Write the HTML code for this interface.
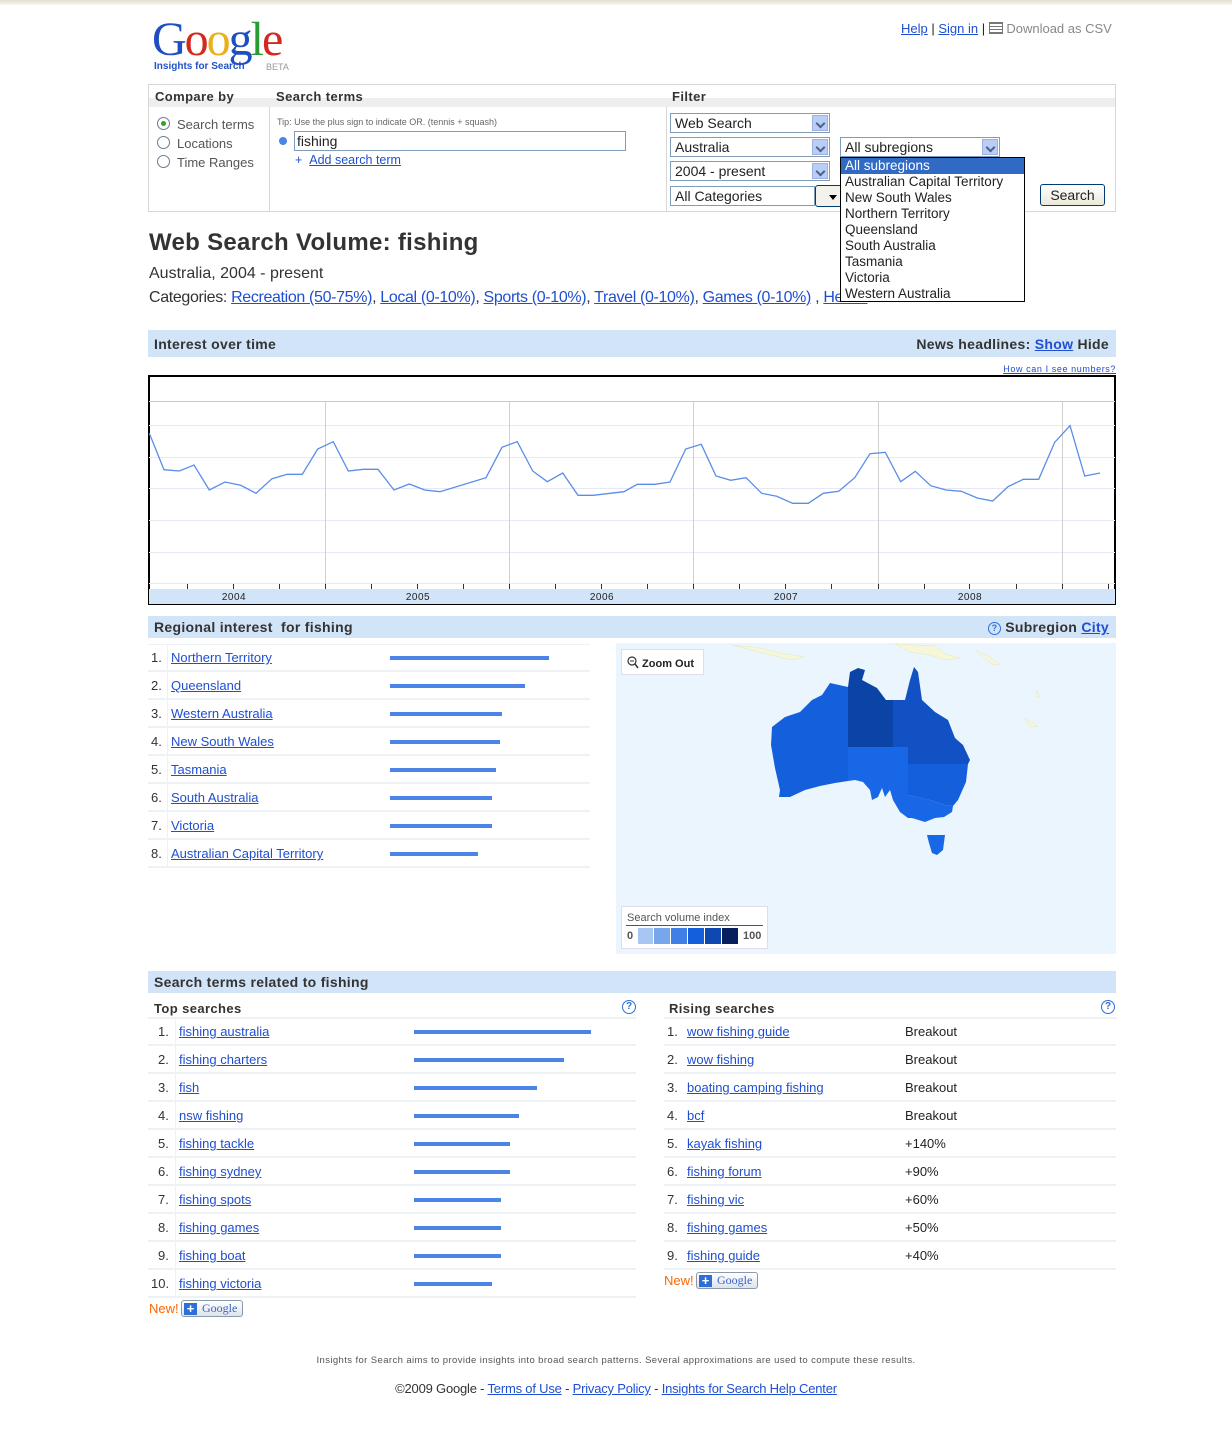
<!DOCTYPE html>
<html><head><meta charset="utf-8"><style>
*{margin:0;padding:0;box-sizing:border-box}
body{width:1232px;height:1440px;position:relative;background:#fff;font-family:"Liberation Sans",Arial,sans-serif;font-size:13px;color:#222;overflow:hidden}
.a{position:absolute;white-space:nowrap}
a,.l{color:#1f4fd1;text-decoration:underline}
.hd{position:absolute;left:148px;width:968px;height:25px;background:#d2e4f8;font-weight:bold;font-size:14px;color:#333;padding:5px 6px;letter-spacing:.3px}
.sel{position:absolute;height:20px;border:1px solid #7f9db9;background:#fff;font-size:14px;padding:1px 4px}
.sel i{position:absolute;right:1px;top:1px;width:16px;height:16px;background:#b9cdf6;border:1px solid #9db1e0}
.sel i:after{content:"";position:absolute;left:4px;top:4px;width:5px;height:5px;border-right:2px solid #4d6185;border-bottom:2px solid #4d6185;transform:rotate(45deg)}
.row{position:absolute;height:28px;border-bottom:2px solid #eef2f7;font-size:13px}
.row .n{position:absolute;top:6px;color:#333}
.row .t{position:absolute;top:6px}
.bar{position:absolute;height:4px;background:#4a84e6}
.radio{position:absolute;width:13px;height:13px;border:1px solid #6a7c90;border-radius:50%;background:#fff}
</style></head><body>
<div class="a" style="left:0;top:0;width:1232px;height:5px;background:linear-gradient(#e4dfd0,#f7f5ee)"></div>

<div class="a" style="left:152px;top:14px;font-family:'Liberation Serif',serif;font-size:48px;letter-spacing:-2px;line-height:52px"><span style="color:#1f4fbf">G</span><span style="color:#d3291f">o</span><span style="color:#e8b117">o</span><span style="color:#1f4fbf">g</span><span style="color:#2a9a35">l</span><span style="color:#d3291f">e</span></div>
<div class="a" style="left:154px;top:61px;font-size:10px;font-weight:bold;color:#2152c4">Insights for Search</div>
<div class="a" style="left:266px;top:62px;font-size:9px;color:#999">BETA</div>

<div class="a" style="left:901px;top:21px;font-size:13px"><a>Help</a> | <a>Sign in</a> | <span style="display:inline-block;width:14px;height:12px;border:1px solid #777;vertical-align:-1px;background:linear-gradient(#777 0 1px,transparent 1px) 0 3px/100% 3px"></span> <span style="color:#888">Download as CSV</span></div>

<div class="a" style="left:148px;top:84px;width:968px;height:128px;border:1px solid #d7d7d7"></div>
<div class="a" style="left:149px;top:85px;width:966px;height:22px;background:linear-gradient(#fff,#fff 60%,#eeeeee 60%)"></div>
<div class="a" style="left:155px;top:89px;font-weight:bold;color:#333;letter-spacing:.4px">Compare by</div>
<div class="a" style="left:276px;top:89px;font-weight:bold;color:#333;letter-spacing:.4px">Search terms</div>
<div class="a" style="left:672px;top:89px;font-weight:bold;color:#333;letter-spacing:.4px">Filter</div>
<div class="a" style="left:269px;top:107px;width:1px;height:104px;background:#d7d7d7"></div>
<div class="a" style="left:666px;top:107px;width:1px;height:104px;background:#d7d7d7"></div>
<div class="radio" style="left:157px;top:117px"></div><div class="a" style="left:161px;top:121px;width:5px;height:5px;border-radius:50%;background:#2aa52a"></div>
<div class="radio" style="left:157px;top:136px"></div>
<div class="radio" style="left:157px;top:155px"></div>
<div class="a" style="left:177px;top:117px;color:#555">Search terms</div>
<div class="a" style="left:177px;top:136px;color:#555">Locations</div>
<div class="a" style="left:177px;top:155px;color:#555">Time Ranges</div>
<div class="a" style="left:277px;top:117px;font-size:9px;color:#666">Tip: Use the plus sign to indicate OR. (tennis + squash)</div>
<div class="a" style="left:279px;top:137px;width:8px;height:8px;border-radius:50%;background:#4a84e6"></div>
<div class="a" style="left:294px;top:131px;width:332px;height:20px;border:1px solid #7f9db9;font-size:14px;padding:1px 2px">fishing</div>
<div class="a" style="left:295px;top:153px;color:#1f4fd1;font-size:12.5px">+ &nbsp;<a>Add search term</a></div>

<div class="sel" style="left:670px;top:113px;width:160px">Web Search<i></i></div>
<div class="sel" style="left:670px;top:137px;width:160px">Australia<i></i></div>
<div class="sel" style="left:670px;top:161px;width:160px">2004 - present<i></i></div>
<div class="sel" style="left:670px;top:186px;width:145px">All Categories</div>
<div class="a" style="left:815px;top:185px;width:28px;height:22px;border:1px solid #003c74;border-radius:3px;background:#f3f2ec"><div style="position:absolute;left:13px;top:9px;border:4px solid transparent;border-top:5px solid #000"></div></div>
<div class="sel" style="left:840px;top:137px;width:160px;border-color:#7f9db9">All subregions<i></i></div>
<div class="a" style="left:1040px;top:184px;width:65px;height:22px;border:1px solid #003c74;border-radius:3px;background:linear-gradient(#fff,#ece9d8);font-size:14px;text-align:center;line-height:20px">Search</div>
<div class="a" style="left:840px;top:157px;width:185px;height:145px;border:1px solid #000;background:#fff;font-size:13.5px;line-height:16px;z-index:5">
<div style="background:#316ac5;color:#fff;padding-left:4px">All subregions</div>
<div style="padding-left:4px">Australian Capital Territory</div>
<div style="padding-left:4px">New South Wales</div>
<div style="padding-left:4px">Northern Territory</div>
<div style="padding-left:4px">Queensland</div>
<div style="padding-left:4px">South Australia</div>
<div style="padding-left:4px">Tasmania</div>
<div style="padding-left:4px">Victoria</div>
<div style="padding-left:4px">Western Australia</div>
</div>

<div class="a" style="left:149px;top:229px;font-size:24px;font-weight:bold;color:#333;letter-spacing:.3px">Web Search Volume: fishing</div>
<div class="a" style="left:149px;top:265px;font-size:16px;color:#333">Australia, 2004 - present</div>
<div class="a" style="left:149px;top:289px;font-size:16px;color:#333;letter-spacing:-0.35px">Categories: <a>Recreation (50-75%)</a>, <a>Local (0-10%)</a>, <a>Sports (0-10%)</a>, <a>Travel (0-10%)</a>, <a>Games (0-10%)</a> , <a>Health</a></div>

<div class="hd" style="top:330px;height:27px;padding-top:6px">Interest over time<span style="position:absolute;right:7px;top:6px">News headlines: <a style="color:#1f4fd1">Show</a> Hide</span></div>
<div class="a" style="right:116px;top:364px;font-size:9px;letter-spacing:.6px"><a>How can I see numbers?</a></div>
<svg class="a" style="left:148px;top:375px" width="968" height="230" viewBox="148 375 968 230">
<rect x="149" y="376" width="966" height="228" fill="#fff" stroke="#000" stroke-width="2"/>
<g stroke="#e6e8f4" stroke-width="1">
<line x1="149" y1="425.5" x2="1115" y2="425.5"/><line x1="149" y1="457.5" x2="1115" y2="457.5"/><line x1="149" y1="488.5" x2="1115" y2="488.5"/><line x1="149" y1="520.5" x2="1115" y2="520.5"/><line x1="149" y1="552.5" x2="1115" y2="552.5"/><line x1="149" y1="583.5" x2="1115" y2="583.5"/></g>
<line x1="149" y1="401.5" x2="1115" y2="401.5" stroke="#c8c8c8"/>
<g stroke="#d0d0d0"><line x1="325.5" y1="401" x2="325.5" y2="589"/><line x1="509.5" y1="401" x2="509.5" y2="589"/><line x1="693.5" y1="401" x2="693.5" y2="589"/><line x1="878.5" y1="401" x2="878.5" y2="589"/><line x1="1062.5" y1="401" x2="1062.5" y2="589"/></g>
<rect x="149" y="589" width="966" height="15" fill="#d2e4f8"/>
<g stroke="#333"><line x1="187.5" y1="584" x2="187.5" y2="589"/><line x1="233.5" y1="584" x2="233.5" y2="589"/><line x1="279.5" y1="584" x2="279.5" y2="589"/><line x1="325.5" y1="584" x2="325.5" y2="589"/><line x1="371.5" y1="584" x2="371.5" y2="589"/><line x1="417.5" y1="584" x2="417.5" y2="589"/><line x1="463.5" y1="584" x2="463.5" y2="589"/><line x1="509.5" y1="584" x2="509.5" y2="589"/><line x1="555.5" y1="584" x2="555.5" y2="589"/><line x1="601.5" y1="584" x2="601.5" y2="589"/><line x1="647.5" y1="584" x2="647.5" y2="589"/><line x1="693.5" y1="584" x2="693.5" y2="589"/><line x1="739.5" y1="584" x2="739.5" y2="589"/><line x1="785.5" y1="584" x2="785.5" y2="589"/><line x1="831.5" y1="584" x2="831.5" y2="589"/><line x1="878.5" y1="584" x2="878.5" y2="589"/><line x1="924.5" y1="584" x2="924.5" y2="589"/><line x1="969.5" y1="584" x2="969.5" y2="589"/><line x1="1016.5" y1="584" x2="1016.5" y2="589"/><line x1="1062.5" y1="584" x2="1062.5" y2="589"/><line x1="1108.5" y1="584" x2="1108.5" y2="589"/></g>
<g font-family="Liberation Sans" font-size="10" fill="#222" text-anchor="middle" letter-spacing=".5"><text x="234" y="600">2004</text><text x="418" y="600">2005</text><text x="602" y="600">2006</text><text x="786" y="600">2007</text><text x="970" y="600">2008</text></g>
<polyline fill="none" stroke="#5b8de8" stroke-width="1.3" points="149.3,433.3 164,469.7 179.3,471 194,465 209.3,490 225,482 240.7,485.3 256,493.3 272,478.7 287.3,474.3 302.3,474.3 317.7,449 333.3,441.7 348.3,471 363.3,469.3 378,469.3 394,490 409.3,484 424.7,490 440,491.7 486,477.7 502,447.3 517.3,441.7 532.7,471 547.3,481.7 562.7,473 578,495.3 593.3,495.3 624,491.7 637.3,484.3 655,484.3 670,482 685.7,449 701.3,444.3 716,476 730.7,480.3 746,477.7 761.7,493.3 776.7,496.3 792.7,503.3 808.3,503.3 823.3,493.3 838.7,491.3 854.7,477.7 870,453.7 885.3,452.3 900.7,481.7 915.3,471.3 930.7,485.7 946,490 961.3,491.3 977.3,498 992.7,501 1008,486.7 1023.3,479.3 1038.7,479.3 1054.7,442.3 1070,425.7 1084.7,476 1100,473"/>
</svg>

<div class="hd" style="top:616px;height:22px;padding-top:3px">Regional interest &nbsp;for fishing<span style="position:absolute;right:7px;top:3px"><span style="display:inline-block;width:13px;height:13px;border:1px solid #2d6fd6;border-radius:50%;font-size:9px;color:#2d6fd6;text-align:center;line-height:11px;vertical-align:1px">?</span> Subregion <a>City</a></span></div>
<div class="a" style="left:148px;top:644px;width:442px;height:1px;background:#eef2f7"></div>
<div class="a" style="left:167px;top:644px;width:1px;height:224px;background:#eef2f7"></div>
<div class="row" style="left:148px;top:644px;width:442px"><span class="n" style="left:3px">1.</span><a class="t" style="left:23px">Northern Territory</a><div class="bar" style="left:242px;top:12px;width:159px"></div></div>
<div class="row" style="left:148px;top:672px;width:442px"><span class="n" style="left:3px">2.</span><a class="t" style="left:23px">Queensland</a><div class="bar" style="left:242px;top:12px;width:135px"></div></div>
<div class="row" style="left:148px;top:700px;width:442px"><span class="n" style="left:3px">3.</span><a class="t" style="left:23px">Western Australia</a><div class="bar" style="left:242px;top:12px;width:112px"></div></div>
<div class="row" style="left:148px;top:728px;width:442px"><span class="n" style="left:3px">4.</span><a class="t" style="left:23px">New South Wales</a><div class="bar" style="left:242px;top:12px;width:110px"></div></div>
<div class="row" style="left:148px;top:756px;width:442px"><span class="n" style="left:3px">5.</span><a class="t" style="left:23px">Tasmania</a><div class="bar" style="left:242px;top:12px;width:106px"></div></div>
<div class="row" style="left:148px;top:784px;width:442px"><span class="n" style="left:3px">6.</span><a class="t" style="left:23px">South Australia</a><div class="bar" style="left:242px;top:12px;width:102px"></div></div>
<div class="row" style="left:148px;top:812px;width:442px"><span class="n" style="left:3px">7.</span><a class="t" style="left:23px">Victoria</a><div class="bar" style="left:242px;top:12px;width:102px"></div></div>
<div class="row" style="left:148px;top:840px;width:442px"><span class="n" style="left:3px">8.</span><a class="t" style="left:23px">Australian Capital Territory</a><div class="bar" style="left:242px;top:12px;width:88px"></div></div>

<svg class="a" style="left:616px;top:643px" width="500" height="311" viewBox="616 643 500 311">
<rect x="616" y="643" width="500" height="311" fill="#eaf5fd"/>
<g fill="#f6f7d8" stroke="#e6e8c4" stroke-width=".5">
<path d="M732 645 L758 652 L775 656 L790 660 L805 657 L780 653 L760 648 Z"/>
<path d="M895 644 L935 646 L945 654 L960 658 L945 660 L930 655 L910 652 Z"/>
<path d="M975 650 L990 657 L1000 665 L992 664 Z"/><path d="M1037 690 L1040 696 L1036 697 Z"/><path d="M1024 718 L1038 726 L1030 727 Z"/>
</g>
<path fill="#145fdc" d="M848 687 L830 683 L822 695 L812 700 L800 712 L785 717 L772 727 L771 745 L775 768 L780 790 L779 797 L790 797 L805 790 L820 786 L835 783 L848 781 Z"/>
<path fill="#0b44a4" d="M848 687 L850 672 L858 668 L865 670 L862 680 L877 688 L886 700 L893 700 L893 747 L848 747 Z"/>
<path fill="#1151c4" d="M893 700 L905 700 L910 680 L914 667 L918 672 L922 700 L935 712 L948 720 L955 738 L963 745 L970 760 L968 764 L908 764 L908 747 L893 747 Z"/>
<path fill="#1767e6" d="M848 747 L908 747 L908 818 L900 812 L893 800 L890 790 L885 797 L882 788 L878 797 L872 800 L870 790 L863 782 L855 780 L848 781 Z"/>
<path fill="#145fdc" d="M908 764 L968 764 L966 782 L958 800 L953 806 L945 805 L930 800 L908 795 Z"/>
<path fill="#1767e6" d="M908 795 L930 800 L945 805 L953 806 L952 812 L944 817 L935 818 L925 822 L912 818 L908 818 Z"/>
<path fill="#1767e6" d="M927 835 L945 835 L943 850 L937 855 L932 853 L929 843 Z"/>
</svg>
<div class="a" style="left:621px;top:649px;width:83px;height:26px;background:#fff;border:1px solid #dde;font-size:11px;font-weight:bold;padding:6px 0 0 5px"><svg width="12" height="13" style="vertical-align:-2px"><circle cx="5" cy="5" r="4" fill="none" stroke="#333" stroke-width="1.2"/><line x1="3" y1="5" x2="7" y2="5" stroke="#333"/><line x1="8" y1="8" x2="11" y2="12" stroke="#333" stroke-width="1.5"/></svg> Zoom Out</div>
<div class="a" style="left:621px;top:906px;width:147px;height:43px;background:#fff;border:1px solid #dde"></div>
<div class="a" style="left:627px;top:912px;font-size:11px;color:#555">Search volume index</div>
<div class="a" style="left:626px;top:925px;width:137px;height:1px;background:#555"></div>
<div class="a" style="left:627px;top:930px;font-size:11px;color:#555;font-weight:bold">0</div>
<div class="a" style="left:638px;top:928px;display:flex;gap:1px"><div style="width:15px;height:16px;background:#a8c6f2"></div><div style="width:16px;height:16px;background:#78a6ec"></div><div style="width:16px;height:16px;background:#3f80e6"></div><div style="width:16px;height:16px;background:#145fdc"></div><div style="width:16px;height:16px;background:#0f48b0"></div><div style="width:16px;height:16px;background:#071f5c"></div></div>
<div class="a" style="left:743px;top:930px;font-size:11px;color:#555;font-weight:bold">100</div>

<div class="hd" style="top:971px;height:22px;padding-top:3px">Search terms related to fishing</div>
<div class="a" style="left:154px;top:1001px;font-weight:bold;color:#333;letter-spacing:.4px">Top searches</div>
<div class="a" style="left:622px;top:1000px;width:14px;height:14px;border:1px solid #2d6fd6;border-radius:50%;font-size:10px;color:#2d6fd6;text-align:center;line-height:12px;font-weight:bold">?</div>
<div class="a" style="left:669px;top:1001px;font-weight:bold;color:#333;letter-spacing:.4px">Rising searches</div>
<div class="a" style="left:1101px;top:1000px;width:14px;height:14px;border:1px solid #2d6fd6;border-radius:50%;font-size:10px;color:#2d6fd6;text-align:center;line-height:12px;font-weight:bold">?</div>
<div class="a" style="left:148px;top:1017px;width:488px;height:2px;background:#eef2f7"></div>
<div class="a" style="left:664px;top:1017px;width:452px;height:2px;background:#eef2f7"></div>
<div class="a" style="left:175px;top:1018px;width:1px;height:280px;background:#eef2f7"></div>

<div class="row" style="left:148px;top:1018px;width:488px"><span class="n" style="left:10px">1.</span><a class="t" style="left:31px">fishing australia</a><div class="bar" style="left:266px;top:12px;width:177px"></div></div>
<div class="row" style="left:148px;top:1046px;width:488px"><span class="n" style="left:10px">2.</span><a class="t" style="left:31px">fishing charters</a><div class="bar" style="left:266px;top:12px;width:150px"></div></div>
<div class="row" style="left:148px;top:1074px;width:488px"><span class="n" style="left:10px">3.</span><a class="t" style="left:31px">fish</a><div class="bar" style="left:266px;top:12px;width:123px"></div></div>
<div class="row" style="left:148px;top:1102px;width:488px"><span class="n" style="left:10px">4.</span><a class="t" style="left:31px">nsw fishing</a><div class="bar" style="left:266px;top:12px;width:105px"></div></div>
<div class="row" style="left:148px;top:1130px;width:488px"><span class="n" style="left:10px">5.</span><a class="t" style="left:31px">fishing tackle</a><div class="bar" style="left:266px;top:12px;width:96px"></div></div>
<div class="row" style="left:148px;top:1158px;width:488px"><span class="n" style="left:10px">6.</span><a class="t" style="left:31px">fishing sydney</a><div class="bar" style="left:266px;top:12px;width:96px"></div></div>
<div class="row" style="left:148px;top:1186px;width:488px"><span class="n" style="left:10px">7.</span><a class="t" style="left:31px">fishing spots</a><div class="bar" style="left:266px;top:12px;width:87px"></div></div>
<div class="row" style="left:148px;top:1214px;width:488px"><span class="n" style="left:10px">8.</span><a class="t" style="left:31px">fishing games</a><div class="bar" style="left:266px;top:12px;width:87px"></div></div>
<div class="row" style="left:148px;top:1242px;width:488px"><span class="n" style="left:10px">9.</span><a class="t" style="left:31px">fishing boat</a><div class="bar" style="left:266px;top:12px;width:87px"></div></div>
<div class="row" style="left:148px;top:1270px;width:488px"><span class="n" style="left:3px">10.</span><a class="t" style="left:31px">fishing victoria</a><div class="bar" style="left:266px;top:12px;width:78px"></div></div>
<div class="a" style="left:149px;top:1301px;color:#f60;font-size:13px">New!</div>
<div class="a" style="left:181px;top:1300px;width:62px;height:17px;border:1px solid #8a9aaa;border-radius:3px;background:linear-gradient(#fff,#dde4ec);font-family:'Liberation Serif',serif;font-size:12px;color:#3b63c4;padding-left:20px;line-height:15px">Google<span style="position:absolute;left:2px;top:2px;width:13px;height:12px;background:#2d6fd6;color:#fff;font-family:'Liberation Sans';font-weight:bold;font-size:13px;line-height:12px;text-align:center">+</span></div>

<div class="row" style="left:664px;top:1018px;width:452px"><span class="n" style="left:3px">1.</span><a class="t" style="left:23px">wow fishing guide</a><span class="t" style="left:241px">Breakout</span></div>
<div class="row" style="left:664px;top:1046px;width:452px"><span class="n" style="left:3px">2.</span><a class="t" style="left:23px">wow fishing</a><span class="t" style="left:241px">Breakout</span></div>
<div class="row" style="left:664px;top:1074px;width:452px"><span class="n" style="left:3px">3.</span><a class="t" style="left:23px">boating camping fishing</a><span class="t" style="left:241px">Breakout</span></div>
<div class="row" style="left:664px;top:1102px;width:452px"><span class="n" style="left:3px">4.</span><a class="t" style="left:23px">bcf</a><span class="t" style="left:241px">Breakout</span></div>
<div class="row" style="left:664px;top:1130px;width:452px"><span class="n" style="left:3px">5.</span><a class="t" style="left:23px">kayak fishing</a><span class="t" style="left:241px">+140%</span></div>
<div class="row" style="left:664px;top:1158px;width:452px"><span class="n" style="left:3px">6.</span><a class="t" style="left:23px">fishing forum</a><span class="t" style="left:241px">+90%</span></div>
<div class="row" style="left:664px;top:1186px;width:452px"><span class="n" style="left:3px">7.</span><a class="t" style="left:23px">fishing vic</a><span class="t" style="left:241px">+60%</span></div>
<div class="row" style="left:664px;top:1214px;width:452px"><span class="n" style="left:3px">8.</span><a class="t" style="left:23px">fishing games</a><span class="t" style="left:241px">+50%</span></div>
<div class="row" style="left:664px;top:1242px;width:452px"><span class="n" style="left:3px">9.</span><a class="t" style="left:23px">fishing guide</a><span class="t" style="left:241px">+40%</span></div>
<div class="a" style="left:664px;top:1273px;color:#f60;font-size:13px">New!</div>
<div class="a" style="left:696px;top:1272px;width:62px;height:17px;border:1px solid #8a9aaa;border-radius:3px;background:linear-gradient(#fff,#dde4ec);font-family:'Liberation Serif',serif;font-size:12px;color:#3b63c4;padding-left:20px;line-height:15px">Google<span style="position:absolute;left:2px;top:2px;width:13px;height:12px;background:#2d6fd6;color:#fff;font-family:'Liberation Sans';font-weight:bold;font-size:13px;line-height:12px;text-align:center">+</span></div>

<div class="a" style="left:0;width:1232px;top:1355px;text-align:center;font-size:9.5px;color:#555;letter-spacing:.4px">Insights for Search aims to provide insights into broad search patterns. Several approximations are used to compute these results.</div>
<div class="a" style="left:0;width:1232px;top:1381px;text-align:center;font-size:13px;color:#333;letter-spacing:-0.2px">©2009 Google - <a>Terms of Use</a> - <a>Privacy Policy</a> - <a>Insights for Search Help Center</a></div>
</body></html>
